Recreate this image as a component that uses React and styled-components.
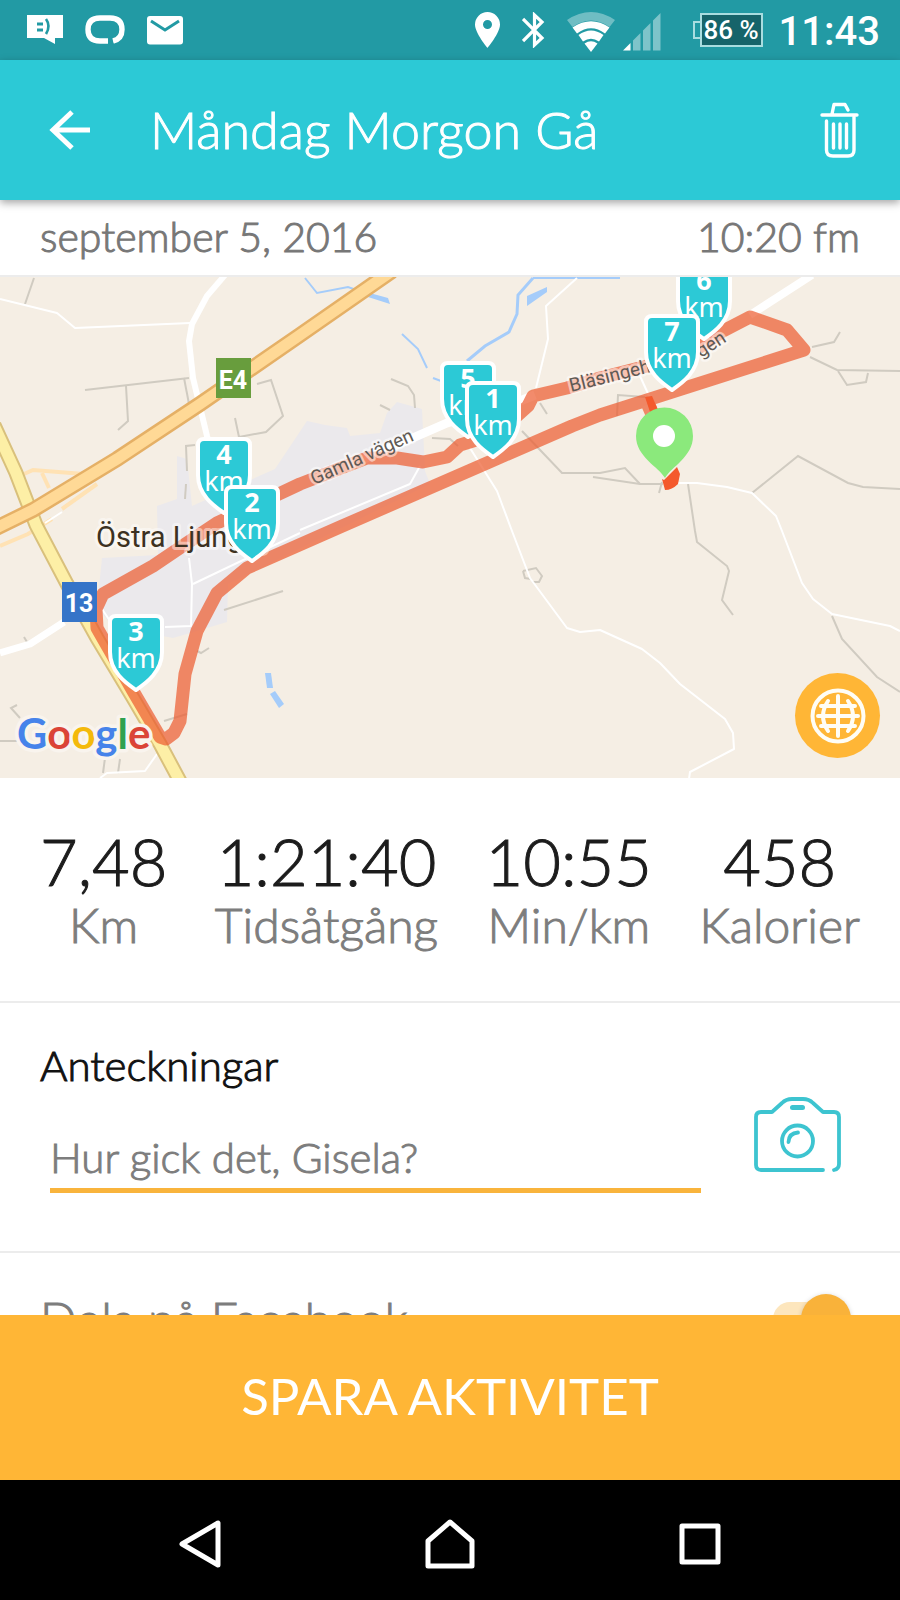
import React, { useState } from "react";
import styled, { createGlobalStyle } from "styled-components";

const TEAL = "#2cc9d6";
const AMBER = "#ffb636";

const GlobalStyle = createGlobalStyle`
  *, *::before, *::after { box-sizing: border-box; }
  body { margin: 0; background: #fff; }
  button { border: 0; padding: 0; background: none; font: inherit; color: inherit; cursor: pointer; }
  svg { display: block; flex: none; }
`;

const Screen = styled.div`
  display: flex;
  flex-direction: column;
  height: 100vh;
  background: #fff;
  font-family: Lato, "Open Sans", sans-serif;
  font-weight: 300;
  color: #1c1c1c;
`;

const StatusBar = styled.div`
  display: flex;
  align-items: center;
  justify-content: space-between;
  flex: none;
  height: 60px;
  padding: 0 20px 0 27px;
  background: #229aa4;
  color: #fff;
`;

const StatusGroup = styled.div`
  display: flex;
  align-items: center;
  gap: ${(p) => p.$gap}px;
`;

const Battery = styled.div`
  display: flex;
  align-items: center;
  margin: 0 16px 0 32px;
`;

const BatteryTip = styled.span`
  width: 7px;
  height: 18px;
  border: 2px solid #a9dde0;
  border-right: 0;
`;

const BatteryLevel = styled.span`
  display: flex;
  align-items: center;
  justify-content: center;
  width: 63px;
  height: 34px;
  border: 2px solid #a9dde0;
  background: #16646a;
  font: 500 26px/30px Roboto, sans-serif;
  white-space: nowrap;
`;

const Clock = styled.span`
  padding-top: 3px;
  font: 500 40px/57px Roboto, sans-serif;
`;

const AppBar = styled.header`
  display: flex;
  align-items: center;
  flex: none;
  height: 140px;
  padding: 0 40px 0 48px;
  background: ${TEAL};
  color: #fff;
  box-shadow: 0 3px 8px rgba(0, 0, 0, 0.35);
  z-index: 1;
`;

const Title = styled.h1`
  flex: 1;
  margin: 0 0 0 58px;
  padding-bottom: 2px;
  font-size: 52px;
  font-weight: 300;
  line-height: 60px;
  -webkit-text-stroke: 1px currentColor;
`;

const Content = styled.main`
  flex: 1;
  min-height: 0;
  overflow-y: auto;
  scrollbar-width: none;
  -webkit-text-stroke: 1px currentColor;
`;

const DateRow = styled.div`
  display: flex;
  align-items: center;
  justify-content: space-between;
  height: 77px;
  padding: 0 40px 2px;
  border-bottom: 2px solid #ececec;
  font-size: 41px;
  line-height: 48px;
  color: #777;
`;

const MapPanel = styled.section`
  position: relative;
  overflow: hidden;
  background: #f5eee4;
  -webkit-text-stroke: 0;
`;

const MapArt = styled.svg`
  width: 100%;
  height: auto;
`;

const GlobeButton = styled.button`
  position: absolute;
  right: 20px;
  bottom: 20px;
  display: flex;
  align-items: center;
  justify-content: center;
  width: 85px;
  height: 85px;
  border-radius: 50%;
  background: ${AMBER};
`;

const Stats = styled.section`
  display: flex;
  justify-content: space-between;
  height: 225px;
  padding: 43px 40px 0;
  border-bottom: 2px solid #ececec;
`;

const Stat = styled.div`
  display: flex;
  flex-direction: column;
  align-items: center;
`;

const StatValue = styled.span`
  font-size: 65px;
  line-height: 80px;
`;

const StatLabel = styled.span`
  font-size: 48px;
  line-height: 48px;
  color: #7d7d7d;
`;

const Notes = styled.section`
  display: flex;
  align-items: flex-start;
  justify-content: space-between;
  height: 250px;
  padding: 38px 58px 0 40px;
  border-bottom: 2px solid #ececec;
`;

const Field = styled.div`
  display: flex;
  flex-direction: column;
  flex: 1;
  gap: 36px;
  margin-right: 52px;
`;

const FieldLabel = styled.label`
  font-size: 42px;
  line-height: 48px;
  color: #111;
`;

const NoteInput = styled.input`
  height: 68px;
  margin-left: 10px;
  padding: 0;
  border: 0;
  border-bottom: 5px solid #f9b43c;
  outline: 0;
  background: none;
  font: inherit;
  font-size: 42px;
  color: #111;
  &::placeholder { color: #7d7d7d; opacity: 1; }
`;

const PhotoButton = styled.button`
  margin-top: 56px;
`;

const ShareRow = styled.section`
  display: flex;
  align-items: center;
  justify-content: space-between;
  height: 132px;
  padding: 0 49px 0 40px;
  font-size: 48px;
  line-height: 56px;
  color: #7d7d7d;
`;

const Toggle = styled.input`
  appearance: none;
  position: relative;
  width: 78px;
  height: 50px;
  margin: 0;
  &::before {
    content: "";
    position: absolute;
    inset: 8px 8px 8px 0;
    border-radius: 17px;
    background: ${(p) => (p.checked ? "#fde6bd" : "#ddd")};
  }
  &::after {
    content: "";
    position: absolute;
    top: 0;
    left: ${(p) => (p.checked ? 28 : 0)}px;
    width: 50px;
    height: 50px;
    border-radius: 50%;
    background: ${(p) => (p.checked ? "#f9b23a" : "#fafafa")};
    box-shadow: 0 1px 5px rgba(0, 0, 0, 0.18);
  }
`;

const SaveButton = styled.button`
  flex: none;
  height: 165px;
  padding-bottom: 4px;
  background: ${AMBER};
  color: #fff;
  font-size: 51px;
  font-weight: 400;
  line-height: 60px;
`;

const NavBar = styled.nav`
  display: grid;
  grid-template-columns: repeat(3, 1fr);
  flex: none;
  height: 120px;
  padding: 0 75px;
  background: #000;
`;

const NavButton = styled.button`
  display: flex;
  align-items: center;
  justify-content: center;
  padding-top: 8px;
`;

const SignText = styled.text`
  font: 700 25px Roboto, sans-serif;
  fill: #fff;
  text-anchor: middle;
`;

const RoadName = styled.text`
  font: 400 19px Roboto, sans-serif;
  fill: #5f5a55;
  stroke: rgba(255, 255, 255, 0.5);
  stroke-width: 5px;
  stroke-linejoin: round;
  paint-order: stroke;
`;

const TownName = styled.text`
  font: 400 29px Roboto, sans-serif;
  fill: #3c3122;
  stroke: rgba(255, 255, 255, 0.45);
  stroke-width: 6px;
  stroke-linejoin: round;
  paint-order: stroke;
`;

const GoogleMark = styled.text`
  font: 700 42px Lato, sans-serif;
  stroke: #f9f4ee;
  stroke-width: 7px;
  stroke-linejoin: round;
  paint-order: stroke;
`;

const PinNumber = styled.text`
  font: 700 27px "Noto Sans", sans-serif;
  fill: #fff;
  text-anchor: middle;
`;

const PinUnit = styled.text`
  font: 400 27px "Noto Sans", sans-serif;
  fill: #fff;
  text-anchor: middle;
`;

const pins = [
  { n: 6, x: 704, y: 340 },
  { n: 7, x: 672, y: 391 },
  { n: 5, x: 468, y: 438 },
  { n: 1, x: 493, y: 458 },
  { n: 4, x: 224, y: 514 },
  { n: 2, x: 252, y: 562 },
  { n: 3, x: 136, y: 691 },
];

const tracks = [
  "34,277 25,303",
  "85,389 189,377",
  "126,385 128,420 118,429",
  "184,377 189,403",
  "257,383 271,379 283,415 266,431 239,436 235,417",
  "195,444 186,445 187,470",
  "186,483 185,498",
  "391,378 408,385 414,394 415,407",
  "380,404 390,409",
  "432,437 450,438 458,445",
  "540,402 547,413",
  "522,430 562,472 600,472 625,467 640,483",
  "593,476 640,483 663,483",
  "523,570 536,567 542,575 539,581 533,581",
  "523,570 525,577 531,578",
  "812,346 834,341 840,331",
  "810,356 837,369 900,370",
  "838,370 847,384 866,381 868,372",
  "617,415 618,394 645,396",
  "688,483 695,530 697,541 727,565 729,570 722,599 733,614",
  "752,492 798,455 848,482 863,486 900,488",
  "832,615 842,638 877,676 900,691",
  "224,609 283,590",
  "197,650 201,652 209,647",
  "17,704 11,707 20,717",
  "0,740 17,740",
  "105,757 103,772",
  "120,758 118,772",
  "164,720 187,713",
  "24,636 27,641",
  "662,481 659,492",
];

const lanes = [
  "0,298 57,312 75,327 190,322",
  "577,277 546,305 548,338 536,387",
  "300,529 410,483 420,465",
  "193,583 300,532",
  "189,557 192,583 191,625 165,626",
  "102,608 110,620",
  "470,447 497,490 512,530 530,577 567,627 580,631 600,629 642,648 660,662 680,683 725,718 733,732 734,748 690,771 689,778",
  "640,375 650,397",
  "678,482 697,482 727,486 752,492 776,515 782,530 802,582 813,598 832,613 890,625 900,630",
  "100,777 107,772 145,770 157,753",
  "45,522 62,511",
];

const streams = [
  "305,277 317,292 348,286 368,293",
  "402,333 418,348 427,367",
  "433,377 441,380",
  "533,277 620,277",
];

const motorway = "-6,528 33,509 117,458 200,403 300,334 392,270";
const route13 = "-6,424 16,472 36,524 67,583 97,637 133,697 160,743 182,784";
const route =
  "804,349 787,329 750,316 723,330 700,346 647,365 600,377 567,387 533,395 528,405 518,414 473,440 460,444 447,456 423,461 397,457 367,457 300,483 217,522 187,542 153,565 103,593 96,608 97,627 133,690 160,736 166,738 174,732 180,720 185,673 197,630 217,592 247,567 340,526 487,462 572,425 600,414";

function KmPin({ n, x, y }) {
  return (
    <g transform={`translate(${x} ${y})`}>
      <path
        d="M-20-76H20Q26-76 26-70V-40C26-20 10-9 0-2C-10-9-26-20-26-40V-70Q-26-76-20-76Z"
        fill={TEAL}
        stroke="#fff"
        strokeWidth="4"
        strokeLinejoin="round"
      />
      <PinNumber x="0" y="-51">{n}</PinNumber>
      <PinUnit x="0" y="-24">km</PinUnit>
    </g>
  );
}

function RouteMap() {
  return (
    <MapArt viewBox="0 276 900 501" role="img" aria-label="Karta">
      <path
        d="M102 557L158 554L157 505L177 498V455L187 458L192 505L275 468L307 420L325 424L347 427L350 435L380 432L387 412L397 401L422 408L425 470L430 483L228 583L227 621L197 630L173 637L112 625L97 606Z"
        fill="#ebe9ec"
      />
      <g fill="none" stroke="#d0cbc1" strokeWidth="2">
        {tracks.map((p) => <polyline key={p} points={p} />)}
      </g>
      <g fill="none" stroke="#a5ccfa" strokeWidth="2">
        {streams.map((p) => <polyline key={p} points={p} />)}
        <polyline points="533,277 518,294 517,313 509,331 485,345 467,360" strokeWidth="3" />
      </g>
      <g fill="#a5ccfa">
        <path d="M366 291L388 297L390 303L368 296Z" />
        <path d="M527 295L547 286L547 291L527 305Z" />
        <path d="M265 672H271L273 687H267Z" />
        <path d="M270 693L275 690L284 703L279 707Z" />
      </g>
      <g fill="none" stroke="#ffe2b4" strokeWidth="4">
        <polyline points="24,473 33,469 84,473" />
        <polyline points="42,472 49,487" />
        <polyline points="62,508 97,483" />
        <polyline points="0,545 28,533 52,518" />
      </g>
      <g fill="none" stroke="#fff" strokeLinejoin="round">
        <g strokeWidth="2">
          {lanes.map((p) => <polyline key={p} points={p} />)}
        </g>
        <polyline points="225,274 207,295 192,323 189,340 193,377 207,435 214,460" strokeWidth="6" />
        <polyline points="0,652 30,643 64,621" strokeWidth="7" />
        <polyline points="360,460 447,422 520,400 535,394" strokeWidth="9" />
        <polyline points="812,274 750,314" strokeWidth="8" />
      </g>
      <g fill="none">
        <polyline points={route13} stroke="#d9c07c" strokeWidth="15" />
        <polyline points={route13} stroke="#fdefa6" strokeWidth="11" />
        <polyline points={motorway} stroke="#e5b066" strokeWidth="16" />
        <polyline points={motorway} stroke="#ffd996" strokeWidth="11" />
      </g>
      <polygon
        points={route}
        fill="none"
        stroke="#ed5a2e"
        strokeOpacity="0.7"
        strokeWidth="13"
        strokeLinejoin="round"
      />
      <polyline points="648,403 654,417" fill="none" stroke="#ef8866" strokeWidth="14" />
      <path d="M645 396L652 395L658 409L650 411Z" fill="#f4592c" />
      <path d="M664 479L677 466L680 473L678 483Q672 489 665 489L662 478Z" fill="#f4592c" />

      <RoadName transform="translate(314 484) rotate(-24)">Gamla vägen</RoadName>
      <RoadName transform="translate(571 391) rotate(-14)">Bläsingeh</RoadName>
      <RoadName transform="translate(701 357) rotate(-33)">gen</RoadName>
      <TownName x="96" y="546">Östra Ljungby</TownName>

      <rect x="216" y="357" width="35" height="40" fill="#689d3d" />
      <SignText x="233" y="388">E4</SignText>
      <rect x="62" y="581" width="35" height="40" fill="#3574c8" />
      <SignText x="79" y="611">13</SignText>

      {pins.map((p) => <KmPin key={p.n} {...p} />)}

      <path d="M665 477C659 466 636 456 636 435A28 28 0 0 1 693 435C693 456 671 466 665 477Z" fill="#8be97c" />
      <circle cx="664" cy="435" r="11" fill="#fff" />

      <GoogleMark x="17" y="748">
        <tspan fill="#4683ea">G</tspan>
        <tspan fill="#db4437">o</tspan>
        <tspan fill="#f4b90b">o</tspan>
        <tspan fill="#4683ea">g</tspan>
        <tspan fill="#2fa14f">l</tspan>
        <tspan fill="#db4437">e</tspan>
      </GoogleMark>
    </MapArt>
  );
}

const ChatIcon = () => (
  <svg width="36" height="30" viewBox="0 0 36 30">
    <path d="M0 0H36V23H28V29L17 23H0Z" fill="#fff" />
    <path d="M10 9H16M10 15H16" stroke="#229aa4" strokeWidth="3" />
    <path d="M19 4Q24 11 19 19" fill="none" stroke="#229aa4" strokeWidth="2.6" />
  </svg>
);

const LoopIcon = () => (
  <svg width="40" height="30" viewBox="0 0 40 30" fill="none" stroke="#fff" strokeWidth="5.400">
    <path d="M23 26H15Q3 26 3 14.500Q3 3 15 3H25Q37 3 37 14.500Q37 24 28 26" />
    <path d="M24.500 22L28.500 30" stroke="#229aa4" strokeWidth="1.500" />
  </svg>
);

const MailIcon = () => (
  <svg width="36" height="29" viewBox="0 0 36 29">
    <rect width="36" height="28.500" rx="3" fill="#fff" />
    <path d="M4 5L18 14L32 5" fill="none" stroke="#229aa4" strokeWidth="3" />
  </svg>
);

const PlaceIcon = () => (
  <svg width="25" height="36" viewBox="0 0 25 36">
    <path fillRule="evenodd" d="M12.500 0A12.500 12.500 0 0 0 0 12.500C0 21 12.500 36 12.500 36S25 21 25 12.500A12.500 12.500 0 0 0 12.500 0ZM12.500 8A4.500 4.500 0 1 1 12.500 17A4.500 4.500 0 0 1 12.500 8Z" fill="#fff" />
  </svg>
);

const BluetoothIcon = () => (
  <svg width="23" height="36" viewBox="0 0 23 36" fill="none" stroke="#fff" strokeWidth="3.200">
    <path d="M1 7L20 26L12.500 33V3L20 10L1 29" />
  </svg>
);

const WifiIcon = () => (
  <svg width="48" height="44" viewBox="0 -4 48 44">
    <path d="M0 8Q24 -8 48 8L42.500 15Q24 2 5.500 15Z" fill="#fff" fillOpacity="0.35" />
    <path d="M5.500 15.500Q24 3 42.500 15.500L38 21.500Q24 11 10 21.500Z" fill="#fff" />
    <path d="M11.500 23Q24 14 36.500 23L32 29.500Q24 24 16 29.500Z" fill="#fff" />
    <path d="M17.500 31.500Q24 27 30.500 31.500L24 40Z" fill="#fff" />
  </svg>
);

const SignalIcon = () => (
  <svg width="38" height="41" viewBox="0 -3 38 41">
    <path d="M0 37.500L7.500 30V37.500Z" fill="#fff" />
    <path d="M10 27.500L17.500 20V37.500H10ZM20 17.500L27.500 10V37.500H20ZM30 7.500L37.500 0V37.500H30Z" fill="#fff" fillOpacity="0.42" />
  </svg>
);

const BackIcon = () => (
  <svg width="44" height="40" viewBox="0 0 44 40" fill="none" stroke="#fff" strokeWidth="5">
    <path d="M24 2L5 20L24 38M5 20H42" />
  </svg>
);

const TrashIcon = () => (
  <svg width="40" height="56" viewBox="0 0 40 56" fill="none" stroke="#fff" strokeWidth="3.400" strokeLinecap="round" strokeLinejoin="round">
    <path d="M2 13H37M12 12L14 2.500H25L28 8" />
    <path d="M6.500 19V48Q6.500 54 13 54H28Q34 54 34 48V15M13.500 22V46M20 22V46M26.500 22V46" />
  </svg>
);

const GlobeIcon = () => (
  <svg width="56" height="56" viewBox="0 0 56 56" fill="none" stroke="#fffdf5" strokeWidth="4" strokeLinecap="round">
    <circle cx="28" cy="28" r="25.500" />
    <path d="M28 8V48M8 28H48M11 18H45M11 38H45" />
    <path d="M18 13Q8 28 18 43M38 13Q48 28 38 43" />
  </svg>
);

const CameraIcon = () => (
  <svg width="89" height="76" viewBox="0 0 89 76" fill="none" stroke="#3dc4d0" strokeWidth="3.800" strokeLinecap="round" strokeLinejoin="round">
    <path d="M70 73H8Q3 73 3 68V20Q3 15 8 15H19L29 6Q33 2 39 2H50Q56 2 60 6L70 15H81Q86 15 86 20V67Q86 72 81 73" />
    <circle cx="44.500" cy="44" r="15.500" />
    <path d="M35.500 45Q36 36 45 35.500" />
    <path d="M39.500 10.500H49.500" strokeWidth="5" />
  </svg>
);

const stats = [
  { value: "7,48", label: "Km" },
  { value: "1:21:40", label: "Tidsåtgång" },
  { value: "10:55", label: "Min/km" },
  { value: "458", label: "Kalorier" },
];

export default function App() {
  const [note, setNote] = useState("");
  const [share, setShare] = useState(true);

  return (
    <>
      <GlobalStyle />
      <Screen>
        <StatusBar>
          <StatusGroup $gap={22}>
            <ChatIcon />
            <LoopIcon />
            <MailIcon />
          </StatusGroup>
          <StatusGroup $gap={0}>
            <StatusGroup $gap={22}>
              <PlaceIcon />
              <BluetoothIcon />
              <StatusGroup $gap={8}>
                <WifiIcon />
                <SignalIcon />
              </StatusGroup>
            </StatusGroup>
            <Battery>
              <BatteryTip />
              <BatteryLevel>86 %</BatteryLevel>
            </Battery>
            <Clock>11:43</Clock>
          </StatusGroup>
        </StatusBar>

        <AppBar>
          <button type="button" aria-label="Tillbaka"><BackIcon /></button>
          <Title>Måndag Morgon Gå</Title>
          <button type="button" aria-label="Ta bort"><TrashIcon /></button>
        </AppBar>

        <Content>
          <DateRow>
            <span>september 5, 2016</span>
            <span>10:20 fm</span>
          </DateRow>

          <MapPanel>
            <RouteMap />
            <GlobeButton type="button" aria-label="Karttyp"><GlobeIcon /></GlobeButton>
          </MapPanel>

          <Stats>
            {stats.map((s) => (
              <Stat key={s.label}>
                <StatValue>{s.value}</StatValue>
                <StatLabel>{s.label}</StatLabel>
              </Stat>
            ))}
          </Stats>

          <Notes>
            <Field>
              <FieldLabel htmlFor="note">Anteckningar</FieldLabel>
              <NoteInput
                id="note"
                type="text"
                placeholder="Hur gick det, Gisela?"
                value={note}
                onChange={(e) => setNote(e.target.value)}
              />
            </Field>
            <PhotoButton type="button" aria-label="Lägg till foto"><CameraIcon /></PhotoButton>
          </Notes>

          <ShareRow>
            <label htmlFor="share">Dela på Facebook</label>
            <Toggle
              id="share"
              type="checkbox"
              checked={share}
              onChange={(e) => setShare(e.target.checked)}
            />
          </ShareRow>
        </Content>

        <SaveButton type="button">SPARA AKTIVITET</SaveButton>

        <NavBar>
          <NavButton type="button" aria-label="Bakåt">
            <svg width="44" height="50" viewBox="0 0 44 50" fill="none" stroke="#fff" strokeWidth="5" strokeLinejoin="round">
              <path d="M40 4V46L4 25Z" />
            </svg>
          </NavButton>
          <NavButton type="button" aria-label="Hem">
            <svg width="50" height="52" viewBox="0 0 50 52" fill="none" stroke="#fff" strokeWidth="5" strokeLinejoin="round">
              <path d="M3 48V23L25 4L47 23V48Z" />
            </svg>
          </NavButton>
          <NavButton type="button" aria-label="Översikt">
            <svg width="42" height="42" viewBox="0 0 42 42" fill="none" stroke="#fff" strokeWidth="5" strokeLinejoin="round">
              <rect x="3" y="3" width="36" height="36" />
            </svg>
          </NavButton>
        </NavBar>
      </Screen>
    </>
  );
}
